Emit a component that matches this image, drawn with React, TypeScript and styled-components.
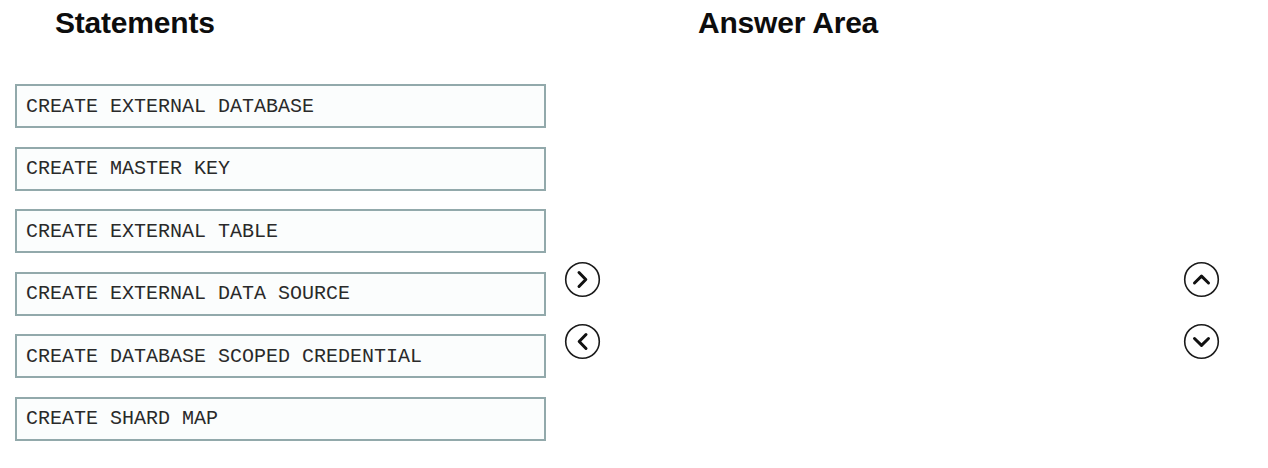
import styled, { createGlobalStyle } from "styled-components";

const GlobalStyle = createGlobalStyle`
  html, body {
    margin: 0;
    padding: 0;
    background: #ffffff;
  }
`;

const statements = [
  "CREATE EXTERNAL DATABASE",
  "CREATE MASTER KEY",
  "CREATE EXTERNAL TABLE",
  "CREATE EXTERNAL DATA SOURCE",
  "CREATE DATABASE SCOPED CREDENTIAL",
  "CREATE SHARD MAP",
];

const SPage = styled.div`
  display: flex;
  width: 1268px;
  height: 468px;
  padding: 6px 0 0 15px;
  box-sizing: border-box;
`;

const SColumn = styled.div`
  display: flex;
  flex-direction: column;
  width: 531px;
`;

const SHeading = styled.h2<{ $indent: number }>`
  margin: 0;
  padding-left: ${({ $indent }) => `${$indent}px`};
  font-family: "Liberation Sans", Arial, sans-serif;
  font-weight: 700;
  font-size: 30px;
  line-height: 34px;
  letter-spacing: -0.2px;
  color: #0d0d0d;
`;

const SList = styled.div`
  display: flex;
  flex-direction: column;
  gap: 18.6px;
  margin-top: 44px;
`;

const SStatement = styled.div`
  height: 44px;
  box-sizing: border-box;
  border: 2px solid #92a9ab;
  background: #fbfdfd;
  padding-left: 9px;
  display: flex;
  align-items: center;
  font-family: "Liberation Mono", "Courier New", monospace;
  font-size: 20px;
  color: #2a2a2a;
  white-space: pre;
`;

const SButtonStack = styled.div<{ $left: number; $right: number }>`
  display: flex;
  flex-direction: column;
  gap: 25px;
  padding-top: 255px;
  margin-left: ${({ $left }) => `${$left}px`};
  margin-right: ${({ $right }) => `${$right}px`};
`;

const SAnswer = styled.div`
  flex: 1;
  display: flex;
  flex-direction: column;
`;

const SCircleButton = styled.button`
  width: 37px;
  height: 37px;
  padding: 0;
  border: none;
  background: transparent;
  display: grid;
  place-items: center;
  cursor: pointer;
`;

type Dir = "right" | "left" | "up" | "down";

const chevrons: Record<Dir, string> = {
  right: "M15 11.5 L21.8 18.5 L15 25.5",
  left: "M22 11.5 L15.2 18.5 L22 25.5",
  up: "M11.5 22 L18.5 15.2 L25.5 22",
  down: "M11.5 15.5 L18.5 22.3 L25.5 15.5",
};

const CircleArrow = ({ dir }: { dir: Dir }) => (
  <SCircleButton aria-label={dir}>
    <svg width="37" height="37" viewBox="0 0 37 37">
      <circle cx="18.5" cy="18.5" r="16.8" fill="none" stroke="#1a1a1a" strokeWidth="1.6" />
      <path
        d={chevrons[dir]}
        fill="none"
        stroke="#111111"
        strokeWidth="3"
        strokeLinecap="round"
        strokeLinejoin="round"
      />
    </svg>
  </SCircleButton>
);

const App = () => {
  return (
    <>
      <GlobalStyle />
      <SPage>
        <SColumn>
          <SHeading $indent={40}>Statements</SHeading>
          <SList>
            {statements.map((s) => (
              <SStatement key={s}>{s}</SStatement>
            ))}
          </SList>
        </SColumn>
        <SButtonStack $left={18} $right={0}>
          <CircleArrow dir="right" />
          <CircleArrow dir="left" />
        </SButtonStack>
        <SAnswer>
          <SHeading $indent={97}>Answer Area</SHeading>
        </SAnswer>
        <SButtonStack $left={0} $right={48}>
          <CircleArrow dir="up" />
          <CircleArrow dir="down" />
        </SButtonStack>
      </SPage>
    </>
  );
};

export default App;
